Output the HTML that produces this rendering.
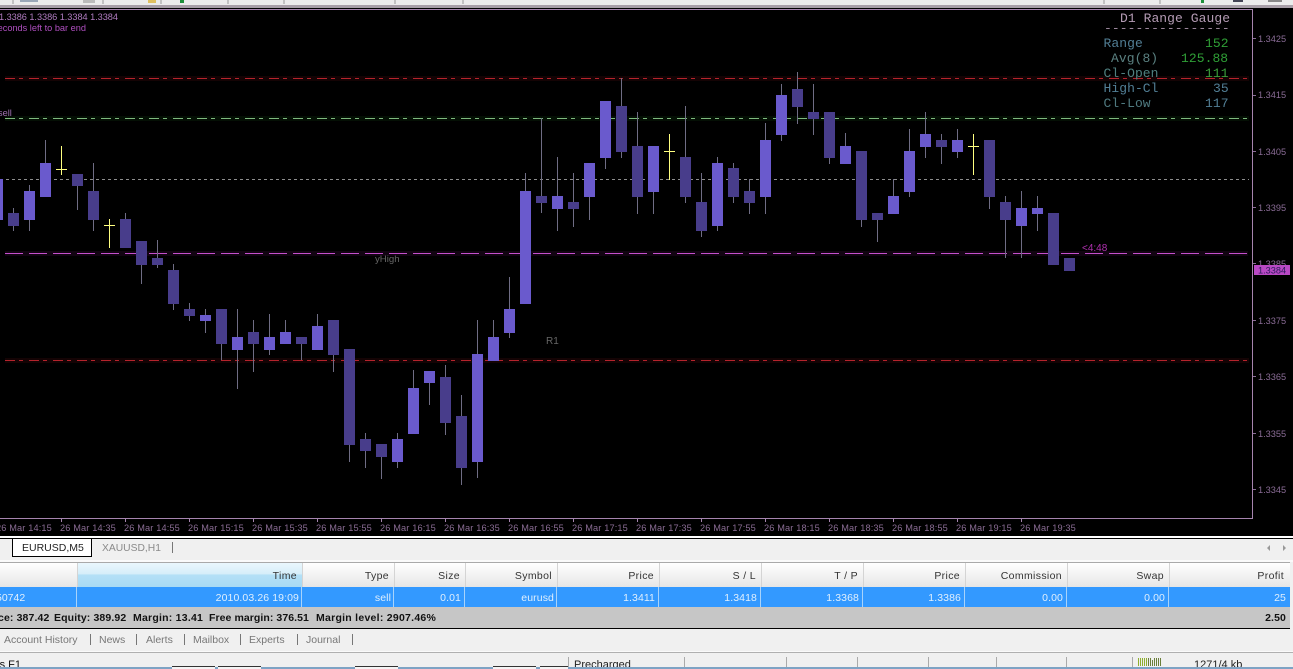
<!DOCTYPE html>
<html><head><meta charset="utf-8"><title>EURUSD,M5</title>
<style>
html,body{margin:0;padding:0;background:#f0f0f0;width:1293px;height:669px;overflow:hidden}
svg{display:block}
text{font-family:"Liberation Sans",sans-serif}
.m{font-family:"Liberation Mono",monospace;font-size:13px;letter-spacing:.06px}
.t{font-size:9.2px;letter-spacing:.15px;fill:#8a6c94}
.p{font-size:9.2px;fill:#8a6c96}
.h{font-size:10.5px;letter-spacing:.35px;fill:#333;text-anchor:end}
.r{font-size:10.5px;letter-spacing:.1px;fill:#e0effd;text-anchor:end}
.b{font-size:10.5px;font-weight:bold;fill:#111;letter-spacing:.12px}
.a{font-size:10.5px;fill:#777}
</style></head><body>
<svg width="1293" height="669" viewBox="0 0 1293 669" xmlns="http://www.w3.org/2000/svg">
<defs>
<linearGradient id="hg" x1="0" y1="0" x2="0" y2="1"><stop offset="0" stop-color="#fff"/><stop offset="1" stop-color="#e6e6e6"/></linearGradient>
<linearGradient id="hb" x1="0" y1="0" x2="0" y2="1"><stop offset="0" stop-color="#eaf7fd"/><stop offset=".45" stop-color="#d6eef9"/><stop offset=".5" stop-color="#b4e0f6"/><stop offset="1" stop-color="#a8daf4"/></linearGradient>
</defs>
<!-- top toolbar -->
<rect width="1293" height="6" fill="#ececec"/>
<rect y="5" width="1293" height="3" fill="#a89fa8"/>
<path d="M13 0V4M103 0V4M161 0V4M228 0V4M284 0V4M395 0V4M463 0V4M1104 0V4M1160 0V4" stroke="#999" fill="none"/>
<rect x="20" y="0" width="18" height="2" fill="#9aa7b8"/>
<rect x="83" y="0" width="12" height="3" fill="#bbb"/>
<rect x="148" y="0" width="8" height="3" fill="#e0c060"/>
<rect x="180" y="0" width="4" height="3" fill="#1d8f3a"/>
<rect x="1201" y="0" width="3" height="3" fill="#1d8f3a"/>
<rect x="1233" y="0" width="10" height="2" fill="#445"/>
<rect x="1268" y="0" width="14" height="2" fill="#888"/>
<!-- chart background -->
<rect y="8" width="1293" height="529" fill="#000"/>
<rect y="9" width="1253" height="1" fill="#a684ae"/>
<rect x="1252" y="9" width="1" height="510" fill="#a684ae"/>
<rect y="518" width="1253" height="1" fill="#a684ae"/>
<path d="M61.5 518V522M125.5 518V522M189.5 518V522M253.5 518V522M317.5 518V522M381.5 518V522M445.5 518V522M509.5 518V522M573.5 518V522M637.5 518V522M701.5 518V522M765.5 518V522M829.5 518V522M893.5 518V522M957.5 518V522M1021.5 518V522" stroke="#a684ae"/>
<path d="M1253 38.5h3M1253 95.5h3M1253 151.5h3M1253 207.5h3M1253 263.5h3M1253 320.5h3M1253 376.5h3M1253 433.5h3M1253 489.5h3" stroke="#8a6c96"/>
<!-- horizontal levels -->
<rect x="5" y="76" width="1244" height="5" fill="#140304"/>
<rect x="5" y="358" width="1244" height="5" fill="#140304"/>
<rect x="5" y="116" width="1244" height="5" fill="#040f04"/>
<rect x="5" y="251" width="1243" height="5" fill="#120412"/>
<path d="M5 78.5H1249M5 360.5H1249" stroke="#b5232c" stroke-dasharray="10 4 4 6" fill="none"/>
<path d="M5 118.5H1249" stroke="#7eb87e" stroke-dasharray="10 4 4 6" fill="none"/>
<path d="M0 179.5H1249" stroke="#8d8d8d" stroke-dasharray="3 3" fill="none"/>
<path d="M5 253.5H1248" stroke="#c44fcc" stroke-dasharray="18 6" fill="none"/>
<!-- wicks -->
<path fill="none" stroke="#6f6d84" d="M13.5 208V231M29.5 185V231M45.5 140V197M77.5 174V210M93.5 163V231M125.5 213V248M141.5 241V284M157.5 240V268M173.5 264V310M189.5 303V321M205.5 309V333M221.5 309V360M237.5 309V389M253.5 320V372M269.5 314V355M285.5 320V344M301.5 337V360M317.5 314V350M333.5 320V372M349.5 349V462M365.5 433V468M381.5 444V479M397.5 433V468M413.5 370V434M429.5 371V405M445.5 365V435M461.5 395V485M477.5 320V478M493.5 320V361M509.5 277V338M525.5 173V304M541.5 118V213M557.5 157V231M573.5 173V227M589.5 163V220M605.5 101V169M621.5 78V158M637.5 112V214M653.5 146V214M685.5 106V203M701.5 173V237M717.5 157V231M733.5 163V203M749.5 179V214M765.5 123V214M781.5 84V141M797.5 72V124M813.5 84V135M829.5 112V164M845.5 133V164M861.5 151V227M877.5 213V242M893.5 179V214M909.5 129V197M925.5 112V158M941.5 134V164M957.5 129V158M989.5 140V209M1005.5 196V258M1021.5 191V258M1037.5 196V231"/>
<!-- light bodies -->
<path fill="#6a5acd" d="M-8 179h11V220h-11zM24 191h11V220h-11zM40 163h11V197h-11zM200 315h11V321h-11zM232 337h11V350h-11zM264 337h11V350h-11zM280 332h11V344h-11zM312 326h11V350h-11zM392 439h11V462h-11zM408 388h11V434h-11zM424 371h11V383h-11zM472 354h11V462h-11zM488 337h11V361h-11zM504 309h11V333h-11zM520 191h11V304h-11zM552 196h11V209h-11zM584 163h11V197h-11zM600 101h11V158h-11zM648 146h11V192h-11zM712 163h11V226h-11zM760 140h11V197h-11zM776 95h11V135h-11zM840 146h11V164h-11zM888 196h11V214h-11zM904 151h11V192h-11zM920 134h11V147h-11zM952 140h11V152h-11zM1016 208h11V226h-11zM1032 208h11V214h-11z"/>
<!-- dark bodies -->
<path fill="#483d8b" d="M8 213h11V226H8zM72 174h11V186H72zM88 191h11V220H88zM120 219h11V248h-11zM136 241h11V265h-11zM152 258h11V265h-11zM168 270h11V304h-11zM184 309h11V316h-11zM216 309h11V344h-11zM248 332h11V344h-11zM296 337h11V344h-11zM328 320h11V355h-11zM344 349h11V445h-11zM360 439h11V451h-11zM376 444h11V457h-11zM440 377h11V423h-11zM456 416h11V468h-11zM536 196h11V203h-11zM568 202h11V209h-11zM616 106h11V152h-11zM632 146h11V197h-11zM680 157h11V197h-11zM696 202h11V231h-11zM728 168h11V197h-11zM744 191h11V203h-11zM792 89h11V107h-11zM808 112h11V119h-11zM824 112h11V158h-11zM856 151h11V220h-11zM872 213h11V220h-11zM936 140h11V147h-11zM984 140h11V197h-11zM1000 202h11V220h-11zM1048 213h11V265h-11zM1064 258h11V271h-11z"/>
<!-- doji -->
<path fill="none" stroke="#ffff80" d="M61.5 146V175M56 169.5H67M109.5 219V248M104 225.5H115M669.5 134V180M664 151.5H675M973.5 134V175M968 146.5H979"/>
<!-- chart labels -->
<text x="-1" y="20" font-size="9.2" fill="#b07cc0" textLength="119">1.3386 1.3386 1.3384 1.3384</text>
<text x="86" y="31" font-size="9.2" fill="#b04fc0" text-anchor="end">seconds left to bar end</text>
<text x="-2" y="116" font-size="9.2" fill="#a070b0">sell</text>
<text x="375" y="262" font-size="9.6" fill="#666">yHigh</text>
<text x="546" y="344" font-size="10" fill="#666">R1</text>
<text x="1082" y="251" font-size="10" fill="#b030b0">&lt;4:48</text>
<!-- range gauge -->
<text class="m" x="1120" y="22" fill="#b49bb4" xml:space="preserve">D1 Range Gauge</text>
<text class="m" x="1104" y="32" fill="#9a859a">----------------</text>
<text class="m" x="1103.5" y="47" fill="#527f96">Range</text>
<text class="m" x="1111" y="62" fill="#5a8080">Avg(8)</text>
<text class="m" x="1103.5" y="77" fill="#4f8080">Cl-Open</text>
<text class="m" x="1103.5" y="92" fill="#527f96">High-Cl</text>
<text class="m" x="1103.5" y="107" fill="#4f7a80">Cl-Low</text>
<text class="m" x="1205" y="47" fill="#2f9f36">152</text>
<text class="m" x="1181" y="62" fill="#2f9f36">125.88</text>
<text class="m" x="1205" y="77" fill="#3a9f3a">111</text>
<text class="m" x="1213" y="92" fill="#527f96">35</text>
<text class="m" x="1205" y="107" fill="#527f96">117</text>
<!-- price axis -->
<text class="p" x="1258" y="42">1.3425</text>
<text class="p" x="1258" y="98">1.3415</text>
<text class="p" x="1258" y="155">1.3405</text>
<text class="p" x="1258" y="211">1.3395</text>
<text class="p" x="1258" y="267">1.3385</text>
<text class="p" x="1258" y="324">1.3375</text>
<text class="p" x="1258" y="380">1.3365</text>
<text class="p" x="1258" y="437">1.3355</text>
<text class="p" x="1258" y="493">1.3345</text>
<rect x="1254" y="265" width="36" height="10" fill="#b949c4"/>
<text x="1258" y="273.5" font-size="9.2" fill="#2a1a5a">1.3384</text>
<!-- time axis -->
<text class="t" x="-4" y="531">26 Mar 14:15</text>
<text class="t" x="60" y="531">26 Mar 14:35</text>
<text class="t" x="124" y="531">26 Mar 14:55</text>
<text class="t" x="188" y="531">26 Mar 15:15</text>
<text class="t" x="252" y="531">26 Mar 15:35</text>
<text class="t" x="316" y="531">26 Mar 15:55</text>
<text class="t" x="380" y="531">26 Mar 16:15</text>
<text class="t" x="444" y="531">26 Mar 16:35</text>
<text class="t" x="508" y="531">26 Mar 16:55</text>
<text class="t" x="572" y="531">26 Mar 17:15</text>
<text class="t" x="636" y="531">26 Mar 17:35</text>
<text class="t" x="700" y="531">26 Mar 17:55</text>
<text class="t" x="764" y="531">26 Mar 18:15</text>
<text class="t" x="828" y="531">26 Mar 18:35</text>
<text class="t" x="892" y="531">26 Mar 18:55</text>
<text class="t" x="956" y="531">26 Mar 19:15</text>
<text class="t" x="1020" y="531">26 Mar 19:35</text>
<!-- chart tabs -->
<rect y="536" width="1293" height="2" fill="#fff"/>
<rect y="538" width="1293" height="1" fill="#000"/>
<rect y="539" width="1293" height="21" fill="#f0f0f0"/>
<rect x="12.5" y="538.5" width="79" height="18" fill="#fff" stroke="#000"/>
<text x="22" y="551" font-size="10.5" fill="#222">EURUSD,M5</text>
<text x="102" y="551" font-size="10.3" fill="#8a8a8a">XAUUSD,H1</text>
<path d="M172.5 542V553" stroke="#777"/>
<path d="M1270 545v6l-3-3zM1283 545v6l3-3z" fill="#999"/>
<!-- table header -->
<rect y="560" width="1293" height="2" fill="#fafafa"/>
<rect y="562" width="1290" height="1" fill="#a9a9a9"/>
<rect y="563" width="1290" height="24" fill="url(#hg)"/>
<rect x="77" y="563" width="225" height="24" fill="url(#hb)"/>
<path d="M77.5 563V587M302.5 563V587M394.5 563V587M465.5 563V587M557.5 563V587M659.5 563V587M761.5 563V587M863.5 563V587M965.5 563V587M1067.5 563V587M1169.5 563V587" stroke="#d4d4d4"/>
<text class="h" x="297" y="579">Time</text>
<text class="h" x="389" y="579">Type</text>
<text class="h" x="460" y="579">Size</text>
<text class="h" x="552" y="579">Symbol</text>
<text class="h" x="654" y="579">Price</text>
<text class="h" x="756" y="579">S / L</text>
<text class="h" x="858" y="579">T / P</text>
<text class="h" x="960" y="579">Price</text>
<text class="h" x="1062" y="579">Commission</text>
<text class="h" x="1164" y="579">Swap</text>
<text class="h" x="1284" y="579">Profit</text>
<!-- selected row -->
<rect y="587" width="1290" height="20" fill="#3399ff"/>
<path d="M76.5 587V607M301.5 587V607M393.5 587V607M464.5 587V607M556.5 587V607M658.5 587V607M760.5 587V607M862.5 587V607M964.5 587V607M1066.5 587V607M1168.5 587V607" stroke="#a8d3fb"/>
<text x="-4" y="601" font-size="10.5" fill="#e0effd">50742</text>
<text class="r" x="299" y="601">2010.03.26 19:09</text>
<text class="r" x="391" y="601">sell</text>
<text class="r" x="461" y="601">0.01</text>
<text class="r" x="554" y="601">eurusd</text>
<text class="r" x="655" y="601">1.3411</text>
<text class="r" x="757" y="601">1.3418</text>
<text class="r" x="859" y="601">1.3368</text>
<text class="r" x="961" y="601">1.3386</text>
<text class="r" x="1063" y="601">0.00</text>
<text class="r" x="1165" y="601">0.00</text>
<text class="r" x="1286" y="601">25</text>
<!-- balance row -->
<rect y="607" width="1290" height="21" fill="#c6c6c6"/>
<text class="b" x="-2" y="621">ce: 387.42</text>
<text class="b" x="54" y="621">Equity: 389.92</text>
<text class="b" x="133" y="621" textLength="70">Margin: 13.41</text>
<text class="b" x="209" y="621" textLength="100">Free margin: 376.51</text>
<text class="b" x="316" y="621" textLength="120">Margin level: 2907.46%</text>
<text class="b" x="1286" y="621" text-anchor="end">2.50</text>
<rect y="628" width="1290" height="1" fill="#000"/>
<!-- terminal tabs -->
<text class="a" x="4" y="643">Account History</text>
<text class="a" x="99" y="643">News</text>
<text class="a" x="146" y="643">Alerts</text>
<text class="a" x="193" y="643">Mailbox</text>
<text class="a" x="249" y="643">Experts</text>
<text class="a" x="306" y="643">Journal</text>
<path d="M90.5 634V645M136.5 634V645M184.5 634V645M240.5 634V645M297.5 634V645M352.5 634V645" stroke="#777"/>
<!-- status bar -->
<rect y="651" width="1293" height="1" fill="#fafafa"/>
<rect y="652" width="1293" height="1" fill="#b0b0b0"/>
<path d="M568.5 657V667M684.5 657V667M786.5 657V667M857.5 657V667M928.5 657V667M996.5 657V667M1066.5 657V667M1132.5 657V667" stroke="#aaa"/>
<text x="21" y="668" font-size="11" fill="#111" text-anchor="end">tics F1</text>
<text x="574" y="668" font-size="11" fill="#222">Precharged</text>
<text x="1194" y="668" font-size="11" fill="#222">1271/4 kb</text>
<path d="M1138.5 658V666M1140.5 658V666M1142.5 658V666M1144.5 658V666M1146.5 658V666" stroke="#8fae2f"/>
<path d="M1148.5 658V666M1150.5 658V666M1152.5 660V666M1154.5 658V666M1156.5 658V666M1158.5 658V666M1160.5 658V666" stroke="#6b7f3a"/>
<!-- OS taskbar -->
<rect y="667" width="1293" height="2" fill="#7ea3c4"/>
<path d="M172 667h43M218 667h43M355 667h43M493 667h43M540 667h28" stroke="#333" fill="none" transform="translate(0 -.5)"/>
<rect x="172" y="667" width="43" height="2" fill="#f4f4f4"/>
<rect x="218" y="667" width="43" height="2" fill="#f4f4f4"/>
<rect x="355" y="667" width="43" height="2" fill="#f4f4f4"/>
<rect x="493" y="667" width="43" height="2" fill="#f4f4f4"/>
<rect x="540" y="667" width="28" height="2" fill="#f4f4f4"/>
</svg>
</body></html>
